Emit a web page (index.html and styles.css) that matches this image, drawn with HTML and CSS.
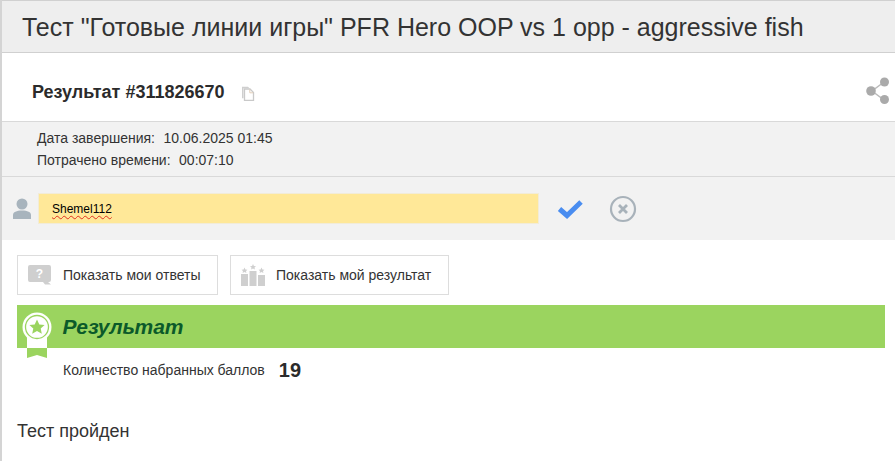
FILE: index.html
```html
<!DOCTYPE html>
<html>
<head>
<meta charset="utf-8">
<title>Результат теста</title>
<link rel="stylesheet" href="styles.css">
</head>
<body>
<div class="wrap">
	<h1 class="test_title">Тест "Готовые линии игры" PFR Hero OOP vs 1 opp - aggressive fish</h1>
	<div class="result_head">
		<b class="result_num">Результат #311826670</b>
		<svg class="ic_copy" width="14" height="15" viewBox="0 0 14 15"><path d="M1 .7h6l1.500 1.500H2.500v10H1z" fill="#cfcfcf"/><path d="M3.500 3h5.500l3.500 3.500v7.800h-9z" fill="#fff" stroke="#c9c9c9" stroke-width="1.300"/><path d="M8.800 3.500v3.300h3.300" fill="none" stroke="#e2cdb8"/></svg>
		<svg class="ic_share" width="24" height="28" viewBox="0 0 24 28"><path d="M18 5 6 14l12 9" fill="none" stroke="#bbb" stroke-width="1.500"/><circle cx="18.500" cy="5" r="4.500" fill="#aaa"/><circle cx="5" cy="14" r="4.800" fill="#aaa"/><circle cx="18.500" cy="22.500" r="4.500" fill="#aaa"/></svg>
	</div>
	<div class="result_info">
		<p>Дата завершения:<span class="info_val">10.06.2025 01:45</span></p>
		<p>Потрачено времени:<span class="info_val">00:07:10</span></p>
	</div>
	<div class="name_row">
		<svg class="ic_user" width="18" height="22" viewBox="0 0 18 22"><circle cx="9" cy="6" r="5.500" fill="#a8b4bd"/><path d="M0 21v-4c0-3 3.500-4.500 9-4.500s9 1.500 9 4.500v4z" fill="#a8b4bd"/></svg>
		<div class="name_input"><span class="name_val">Shemel112</span></div>
		<svg class="ic_ok" width="26" height="20" viewBox="0 0 26 20"><path d="M2.500 10l7.500 6.500L24 3" fill="none" stroke="#4a8df0" stroke-width="5"/></svg>
		<svg class="ic_cancel" width="28" height="28" viewBox="0 0 28 28"><circle cx="14" cy="14" r="12" fill="none" stroke="#a8b2ba" stroke-width="2.200"/><path d="M10 10l8 8M18 10l-8 8" stroke="#a8b2ba" stroke-width="2.800"/></svg>
	</div>
	<div class="btn_row">
		<a class="btn_show">
			<svg width="24" height="20" viewBox="0 0 24 20"><path d="M2 0h19a2 2 0 0 1 2 2v13a2 2 0 0 1-2 2h-1l3 2.500h-6l-2-2.500H2a2 2 0 0 1-2-2V2a2 2 0 0 1 2-2z" fill="#cfcfcf"/><text x="11.500" y="13" class="ic_q">?</text></svg>
			Показать мои ответы
		</a>
		<a class="btn_show">
			<svg width="24" height="22" viewBox="0 0 24 22"><path d="M0 10h7v12H0zM8.500 7h7v15h-7zM17 11h7v11h-7z" fill="#cfcfcf"/><path d="M3.500 3.500l.9 1.900 2.100.3-1.500 1.400.4 2-1.900-1-1.900 1 .4-2-1.500-1.400 2.100-.3zM12 0l.9 1.900 2.100.3-1.500 1.400.4 2-1.900-1-1.900 1 .4-2-1.500-1.400 2.100-.3zM20.500 3.500l.9 1.900 2.100.3-1.500 1.400.4 2-1.900-1-1.900 1 .4-2-1.500-1.400 2.100-.3z" fill="#cfcfcf"/></svg>
			Показать мой результат
		</a>
	</div>
	<div class="result_bar">
		<svg class="ic_medal" width="30" height="46" viewBox="0 0 30 46"><path d="M5 25h20v11H5z" fill="#fff"/><path d="M5 36h20v10l-10-3-10 3z" fill="#9bd45f"/><circle cx="15" cy="15" r="14.500" fill="#fff"/><circle cx="15" cy="15" r="11.500" fill="none" stroke="#9bd45f" stroke-width="1.300"/><path d="M15 7.500l2.300 4.900 5.300.6-3.900 3.600 1.100 5.200-4.800-2.700-4.800 2.700 1.100-5.200-3.900-3.600 5.300-.6z" fill="#9bd45f"/></svg>
		<span class="bar_title">Результат</span>
	</div>
	<div class="score_row">
		<span>Количество набранных баллов</span>
		<b class="score">19</b>
	</div>
	<p class="test_done">Тест пройден</p>
</div>
</body>
</html>
```
FILE: styles.css
```css
* {
	box-sizing:border-box;
}
html, body {
	margin:0;
	padding:0;
	background:#fff;
}
body {
	font-family:"Liberation Sans", Arial, sans-serif;
	color:#333;
	font-size:14px;
}
.wrap {
	width:895px;
	height:461px;
	overflow:hidden;
	border-left:2px solid #d4d4d4;
}
.test_title {
	margin:0;
	height:53px;
	padding:0 0 0 20px;
	background:#eee;
	border-top:1px solid #d0d0d0;
	border-bottom:1px solid #d0d0d0;
	font-size:25px;
	font-weight:normal;
	line-height:53px;
	color:#333;
	white-space:nowrap;
}
.result_head {
	height:68px;
	padding:10px 5px 0 30px;
	display:flex;
	align-items:center;
}
.result_num {
	font-size:18px;
	color:#2b2b2b;
}
.ic_copy {
	margin-left:16px;
	margin-top:3px;
}
.ic_share {
	margin-left:auto;
	margin-top:-2px;
}
.result_info {
	height:56px;
	padding:5px 0 0 35px;
	background:#f2f2f2;
	border-top:1px solid #d9d9d9;
	border-bottom:1px solid #d9d9d9;
}
.result_info p {
	margin:0;
	line-height:22px;
}
.info_val {
	margin-left:8.5px;
}
.name_row {
	height:63px;
	background:#f2f2f2;
	display:flex;
	align-items:center;
	padding:0 0 0 11px;
}
.name_input {
	width:501px;
	height:31px;
	margin-left:7px;
	padding-left:13px;
	background:#ffe898;
	border:1px solid #f2ecd8;
	font-size:12px;
	line-height:30px;
	color:#000;
}
.name_val {
	text-decoration:underline wavy #e03020 1px;
	text-underline-offset:2px;
}
.ic_ok {
	margin-left:18px;
}
.ic_cancel {
	margin-left:26px;
}
.btn_row {
	display:flex;
	gap:12px;
	padding:15px 0 0 15px;
}
.btn_show {
	height:40px;
	padding:0 16.5px 0 10px;
	display:flex;
	align-items:center;
	gap:11px;
	border:1px solid #ddd;
	color:#333;
}
.ic_q {
	font-family:"Liberation Sans", Arial, sans-serif;
	font-size:12px;
	font-weight:bold;
	fill:#fff;
	text-anchor:middle;
}
.result_bar {
	position:relative;
	height:43px;
	width:868px;
	margin:10px 0 0 15px;
	padding-left:45.5px;
	background:#9bd45f;
	line-height:43px;
}
.ic_medal {
	position:absolute;
	left:5px;
	top:7px;
}
.bar_title {
	font-size:21px;
	font-weight:bold;
	font-style:italic;
	color:#0b5a2a;
}
.score_row {
	display:flex;
	align-items:center;
	gap:14px;
	height:44px;
	padding:1px 0 1px 61px;
}
.score {
	font-size:20px;
	color:#2b2b2b;
}
.test_done {
	margin:29px 0 0 15px;
	font-size:18px;
	color:#333;
}
```
